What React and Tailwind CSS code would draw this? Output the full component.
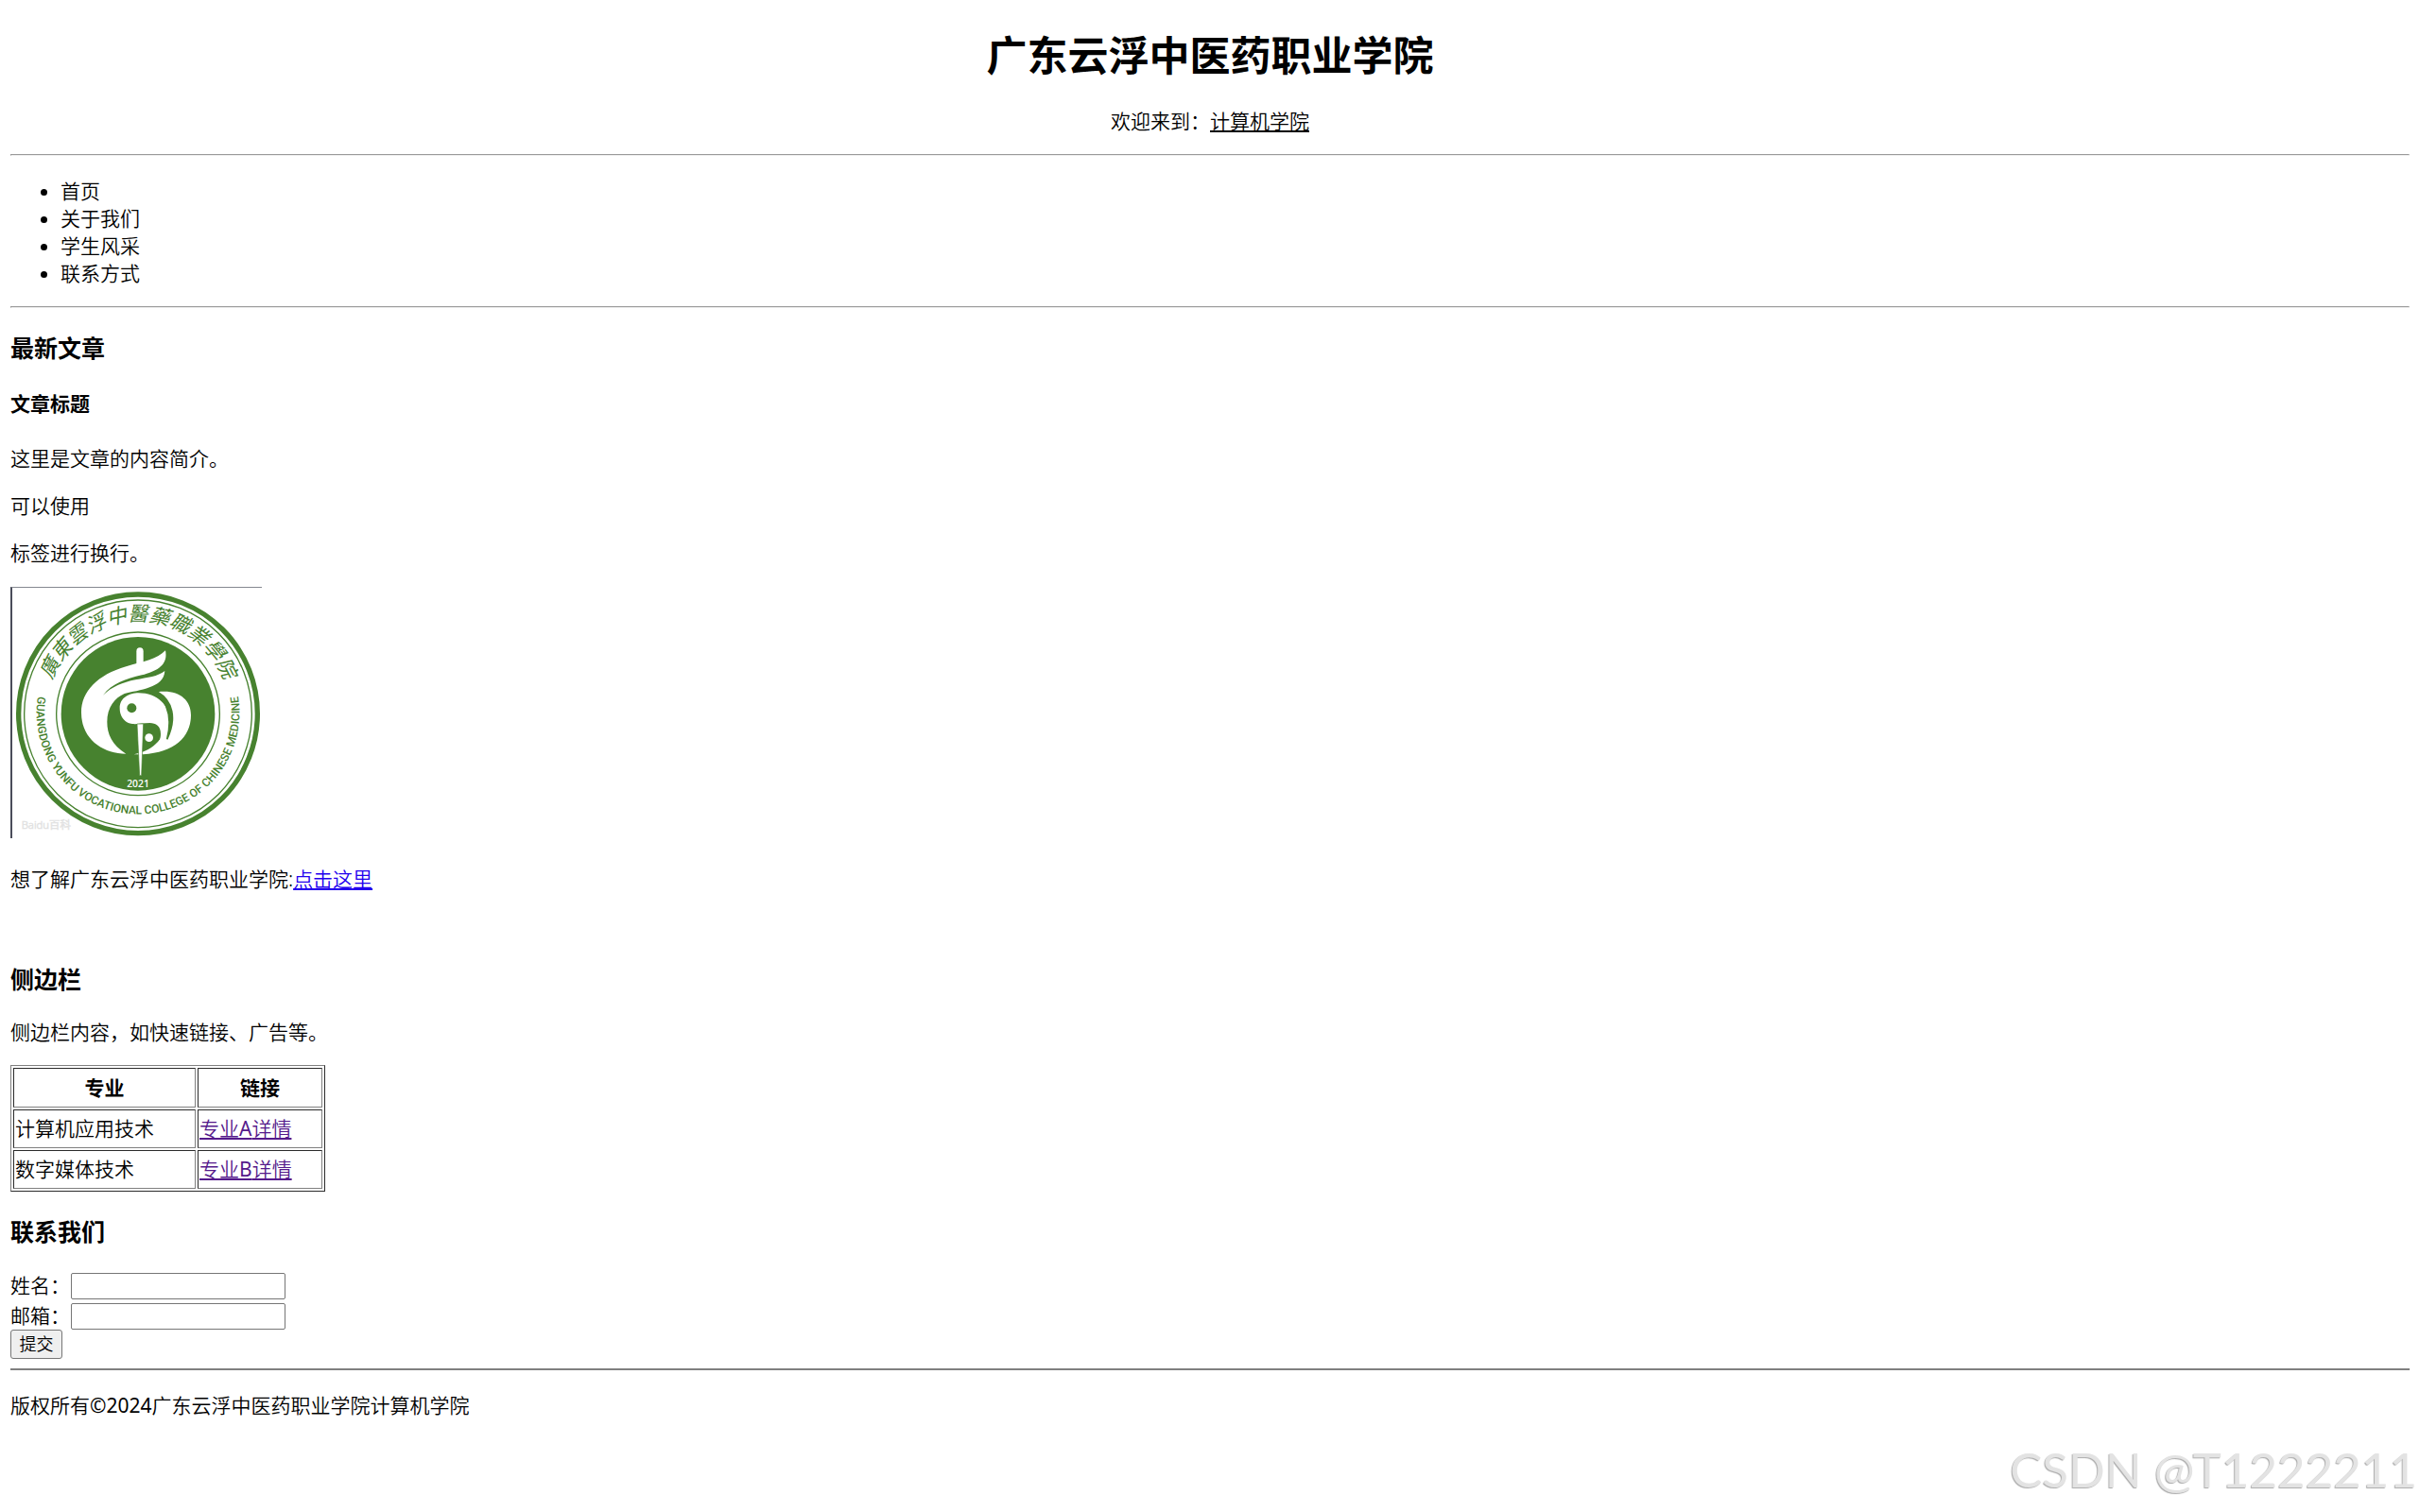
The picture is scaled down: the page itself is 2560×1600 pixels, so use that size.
import { useState } from "react";

const NAV = ["首页", "关于我们", "学生风采", "联系方式"];

const PARAGRAPHS = ["这里是文章的内容简介。", "可以使用", "标签进行换行。"];

const MAJORS = [
    { id: 1, name: "计算机应用技术", code: "A" },
    { id: 2, name: "数字媒体技术", code: "B" },
];

function Divider() {
    return <hr className="h-[2px] border border-[#9a9a9a] border-r-[#eeeeee] border-b-[#eeeeee]" />;
}

function CollegeSeal() {
    return (
        <svg
            viewBox="39 36 792 795"
            role="img"
            aria-label="校徽"
            className="block size-[266px] border-t border-l-2 border-t-[#858890] border-l-[#4a4c5a]"
        >
            <defs>
                <path id="seal-top" d="M 149 476 A 292 292 0 1 1 727 476" />
                <path id="seal-bottom" d="M 121 376 A 322 322 0 1 0 755 376" />
            </defs>

            {/* rings */}
            <circle cx="438" cy="436" r="379" fill="#fff" stroke="#47822f" strokeWidth="16" />
            <circle cx="438" cy="436" r="361" fill="none" stroke="#47822f" strokeWidth="4" />
            <circle cx="438" cy="436" r="259" fill="none" stroke="#47822f" strokeWidth="4" />
            <circle cx="438" cy="436" r="244" fill="#47822f" />

            <text fontSize="64" fill="#47822f" className="font-['Noto_Sans_CJK_TC',sans-serif] font-normal italic">
                <textPath href="#seal-top" startOffset="50%" textAnchor="middle">廣東雲浮中醫藥職業學院</textPath>
            </text>
            <text fontSize="36" fill="#47822f" className="font-[Roboto,sans-serif] font-medium">
                <textPath href="#seal-bottom" startOffset="50%" textAnchor="middle">
                    GUANGDONG YUNFU VOCATIONAL COLLEGE OF CHINESE MEDICINE
                </textPath>
            </text>

            {/* feather and left leaf */}
            <path d="M433 290 V238 Q433 226 444 226 Q455 226 455 238 V276 Z" fill="#fff" />
            <path
                d="M525 235 C500 262 455 270 400 286 C310 312 258 365 258 432 C258 515 325 563 400 563 C355 535 340 500 340 462 C340 415 365 385 395 372 C440 360 520 355 523 300 C500 318 470 320 430 328 C390 336 355 350 327 377 C355 340 400 325 450 313 C500 300 534 280 525 235 Z"
                fill="#fff"
            />
            {/* right leaf */}
            <path
                d="M500 367 C565 358 606 390 606 440 C606 515 545 568 425 565 C500 550 528 500 540 440 C540 405 525 380 500 367 Z"
                fill="#fff"
            />
            {/* yin and yang */}
            <path
                d="M380 418 C380 385 410 370 440 370 C500 370 540 410 540 465 C540 530 500 566 425 565 C480 562 510 535 510 500 C510 475 495 465 475 465 C450 465 435 470 420 468 C395 465 380 445 380 418 Z"
                fill="#fff"
            />
            <path d="M500 367 C548 395 562 450 530 517 C545 460 538 410 500 367 Z" fill="#47822f" stroke="#47822f" strokeWidth="5" />
            <circle cx="418" cy="418" r="15" fill="#47822f" />
            <circle cx="473" cy="512" r="13" fill="#fff" />
            <path d="M435 468 H455 L449 632 H443 Z" fill="#fff" stroke="#47822f" strokeWidth="2" />

            <text x="438" y="668" fontSize="31" textAnchor="middle" fill="#fff" className="font-['Open_Sans',sans-serif] font-semibold">2021</text>
            <text x="68" y="802" fontSize="34" fill="#fff" stroke="#e2e2e2" strokeWidth="2" className="font-['Noto_Sans','Noto_Sans_CJK_SC',sans-serif]">Baidu百科</text>
        </svg>
    );
}

export default function App() {
    const [name, setName] = useState("");
    const [email, setEmail] = useState("");

    return (
        <div className="relative min-h-screen bg-white px-[11px] pt-[30px] font-['Noto_Sans','Noto_Sans_CJK_SC',sans-serif] text-[21px] leading-[29px] font-[350] text-black">
            <header>
                <h1 className="text-center text-[43px] leading-[57px] font-bold">广东云浮中医药职业学院</h1>
                <p className="mt-[27px] mb-[20px] text-center">
                    欢迎来到：<u className="decoration-2 underline-offset-2">计算机学院</u>
                </p>
            </header>

            <Divider />
            <nav>
                <ul className="mt-[23px] mb-[20px] list-disc pl-[53px]">
                    {NAV.map((item) => (
                        <li key={item}>{item}</li>
                    ))}
                </ul>
            </nav>
            <Divider />

            <main>
                <article>
                    <h3 className="mt-[26px] text-[25px] leading-[33px] font-bold">最新文章</h3>
                    <h4 className="mt-[28px] mb-[29px] font-bold">文章标题</h4>
                    {PARAGRAPHS.map((text) => (
                        <p key={text} className="mb-[21px]">{text}</p>
                    ))}
                    <CollegeSeal />
                    <p className="mt-[29px]">
                        想了解广东云浮中医药职业学院:
                        <a href="#" className="text-[#2200ee] underline decoration-2 underline-offset-2">点击这里</a>
                    </p>
                </article>

                <aside>
                    <h3 className="mt-[75px] text-[25px] leading-[33px] font-bold">侧边栏</h3>
                    <p className="mt-[25px] mb-[20px]">侧边栏内容，如快速链接、广告等。</p>
                    <table className="w-[333px] border-separate border-spacing-[2px] border border-t-[#808080] border-r-[#2b2b2b] border-b-[#2b2b2b] border-l-[#808080]">
                        <thead>
                            <tr className="h-[42px]">
                                <th className="w-[193px] border border-t-[#2b2b2b] border-r-[#808080] border-b-[#808080] border-l-[#2b2b2b] p-px font-bold">专业</th>
                                <th className="border border-t-[#2b2b2b] border-r-[#808080] border-b-[#808080] border-l-[#2b2b2b] p-px font-bold">链接</th>
                            </tr>
                        </thead>
                        <tbody>
                            {MAJORS.map((major) => (
                                <tr key={major.id} className="h-[41px]">
                                    <td className="border border-t-[#2b2b2b] border-r-[#808080] border-b-[#808080] border-l-[#2b2b2b] p-px">{major.name}</td>
                                    <td className="border border-t-[#2b2b2b] border-r-[#808080] border-b-[#808080] border-l-[#2b2b2b] p-px">
                                        <a href="#" className="text-[#551a8b] underline decoration-2 underline-offset-2">
                                            专业<span className="font-normal">{major.code}</span>详情
                                        </a>
                                    </td>
                                </tr>
                            ))}
                        </tbody>
                    </table>
                </aside>

                <section>
                    <h3 className="mt-[26px] mb-[26px] text-[25px] leading-[33px] font-bold">联系我们</h3>
                    <form onSubmit={(e) => e.preventDefault()}>
                        <div className="mb-[3px] flex items-center">
                            <label htmlFor="name" className="w-[64px]">姓名：</label>
                            <input
                                id="name"
                                type="text"
                                value={name}
                                onChange={(e) => setName(e.target.value)}
                                className="h-[28px] w-[227px] rounded-[2px] border border-[#767676] px-[2px] text-lg"
                            />
                        </div>
                        <div className="flex items-center">
                            <label htmlFor="email" className="w-[64px]">邮箱：</label>
                            <input
                                id="email"
                                type="email"
                                value={email}
                                onChange={(e) => setEmail(e.target.value)}
                                className="h-[28px] w-[227px] rounded-[2px] border border-[#767676] px-[2px] text-lg"
                            />
                        </div>
                        <button type="submit" className="block h-[31px] w-[55px] rounded-[3px] border border-[#767676] bg-[#efefef] text-lg leading-[29px]">提交</button>
                    </form>
                </section>
            </main>

            <hr className="mt-[10px] h-[2px] border-0 bg-[#808080]" />
            <footer>
                <p className="mt-[23px]">
                    版权所有<span className="font-normal">©2024</span>广东云浮中医药职业学院计算机学院
                </p>
            </footer>

            <div className="absolute right-[3px] bottom-[15px] font-[Lato,sans-serif] text-[51px] leading-[61px] font-normal text-[#e3e3e3] [text-shadow:-1px_1px_1px_#aaaaaa]">
                CSDN @T1222211
            </div>
        </div>
    );
}
